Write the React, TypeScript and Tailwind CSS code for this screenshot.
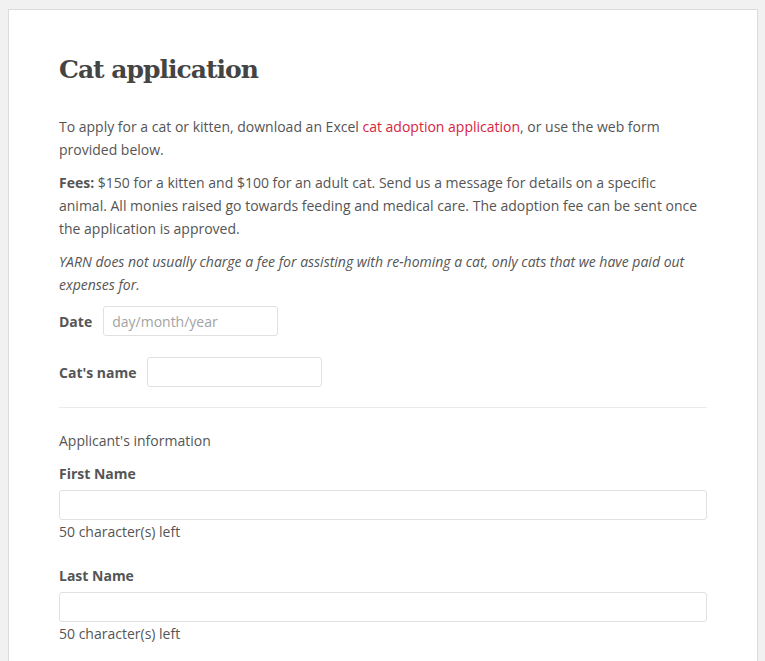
import React from 'react';

const body = { fontFamily: '"Open Sans", "Liberation Sans", sans-serif' };

function Field({ label, className = '' }: { label: string; className?: string }) {
  return (
    <div className={className}>
      <label className="block font-bold leading-[23px]">{label}</label>
      <input
        type="text"
        className="mt-[5px] block h-[30px] w-full rounded-[3px] border border-[#e1e1e1] bg-white px-2 outline-none"
      />
      <div className="leading-[23px]">50 character(s) left</div>
    </div>
  );
}

export default function App() {
  return (
    <div className="min-h-screen bg-[#f1f1f1] pt-[9px] pl-2 pr-[7px]">
      <div className="bg-white border border-[#dcdcdc] px-[50px] pt-[40px] pb-10 text-[14px] text-[#555]" style={body}>
        <h1
          className="text-[25px] font-bold text-[#444] leading-[40px] tracking-[-1px]"
          style={{ fontFamily: '"DejaVu Serif", "Liberation Serif", serif' }}
        >
          Cat application
        </h1>

        <div className="mt-[25px] leading-[23px] space-y-[10px]">
          <p>
            To apply for a cat or kitten, download an Excel{' '}
            <a href="#" className="text-[#d8243e]">cat adoption application</a>, or use the web form provided below.
          </p>
          <p>
            <strong className="font-bold">Fees:</strong> $150 for a kitten and $100 for an adult cat. Send us a message for
            details on a specific animal. All monies raised go towards feeding and medical care. The adoption fee can be sent
            once the application is approved.
          </p>
          <p className="italic">
            YARN does not usually charge a fee for assisting with re-homing a cat, only cats that we have paid out expenses for.
          </p>
        </div>

        <div className="mt-[10px] flex items-center gap-[11px]">
          <label className="font-bold">Date</label>
          <input
            type="text"
            placeholder="day/month/year"
            className="h-[30px] w-[175px] rounded-[3px] border border-[#e1e1e1] px-2 placeholder:text-[#a3a3a3] outline-none"
          />
        </div>

        <div className="mt-[21px] flex items-center gap-[11px]">
          <label className="font-bold">Cat's name</label>
          <input
            type="text"
            className="h-[30px] w-[175px] rounded-[3px] border border-[#e1e1e1] px-2 outline-none"
          />
        </div>

        <hr className="mt-[20px] border-0 border-t border-[#ebebeb]" />

        <div className="mt-[21px] leading-[23px]">Applicant's information</div>

        <Field label="First Name" className="mt-[10px]" />
        <Field label="Last Name" className="mt-[21px]" />
      </div>
    </div>
  );
}
